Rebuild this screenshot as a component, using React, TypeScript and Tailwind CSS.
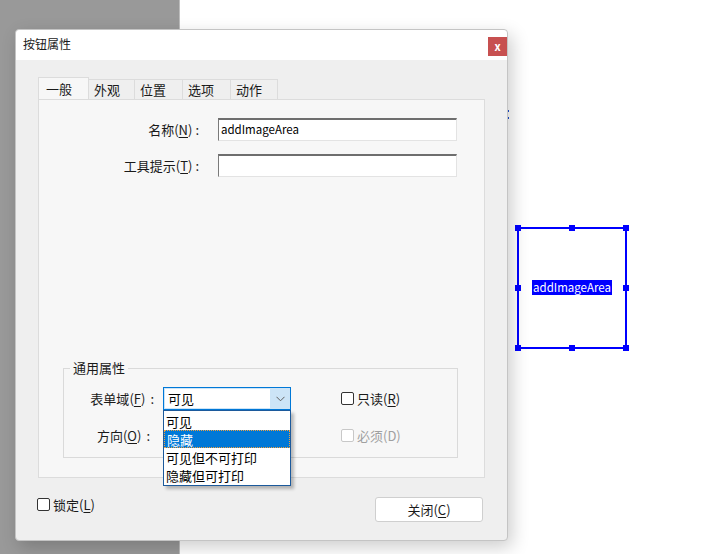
import type { ReactNode } from "react";

const font = { fontFamily: '"Noto Sans CJK SC", "Noto Sans", sans-serif' };

// label text with one underlined access key, e.g. 名称(N)
const Key = ({ pre, k, colon, gap = "ml-[3px]" }: { pre: string; k: string; colon?: boolean; gap?: string }) => (
	<>
		{pre}(<span className="underline underline-offset-2">{k}</span>)
		{colon && <span className={gap}>:</span>}
	</>
);

const Check = ({ children, disabled }: { children: ReactNode; disabled?: boolean }) => (
	<div className={`flex items-center gap-[3px] ${disabled ? "text-[#a0a0a0]" : "text-[#1a1a1a]"}`}>
		<div
			className={`h-[13px] w-[13px] rounded-[2px] border bg-white ${
				disabled ? "border-[#c8c8c8]" : "border-[#333333]"
			}`}
		/>
		<span className="leading-none">{children}</span>
	</div>
);

const TextBox = ({ value = "" }: { value?: string }) => (
	<div className="flex h-[23px] w-[239px] items-center border-t-2 border-l border-r border-b border-t-[#6e6e6e] border-l-[#7a7a7a] border-r-[#e3e3e3] border-b-[#e3e3e3] bg-white px-[2px] text-[11.5px] text-black">
		{value}
	</div>
);

const tabs = [
	{ name: "一般", w: "w-[51px]" },
	{ name: "外观", w: "w-[46px]" },
	{ name: "位置", w: "w-[48px]" },
	{ name: "选项", w: "w-[48px]" },
	{ name: "动作", w: "w-[47px]" },
];

const options = ["可见", "隐藏", "可见但不可打印", "隐藏但可打印"];

const Handle = ({ className }: { className: string }) => (
	<div className={`absolute h-[6px] w-[6px] bg-[#0000ff] ${className}`} />
);

export default function App() {
	return (
		<div className="relative flex h-[554px] w-[718px] overflow-hidden text-[13px]" style={font}>
			{/* desktop: grey margin and white page */}
			<div className="w-[179px] bg-[#999999]" />
			<div className="flex-1 border-l border-[#bdbdbd] bg-white" />

			{/* field on the page */}
			<div className="absolute left-[506px] top-[110px] h-[9px] w-[3px] border-y-2 border-[#1c4fd0]" />
			<div className="absolute left-[517px] top-[227px] flex h-[122px] w-[110px] items-center justify-center border-2 border-[#0000ff]">
				<span className="mb-[1px] bg-[#0000ff] px-[1px] text-[11.5px] leading-[15px] text-white">addImageArea</span>
				<Handle className="-left-[4px] -top-[4px]" />
				<Handle className="left-[50px] -top-[4px]" />
				<Handle className="-right-[4px] -top-[4px]" />
				<Handle className="-left-[4px] top-[56px]" />
				<Handle className="-right-[4px] top-[56px]" />
				<Handle className="-left-[4px] -bottom-[4px]" />
				<Handle className="left-[50px] -bottom-[4px]" />
				<Handle className="-right-[4px] -bottom-[4px]" />
			</div>

			{/* properties window */}
			<div className="absolute left-[15px] top-[29px] flex h-[512px] w-[493px] flex-col rounded-[4px] border border-[#c4c4c4] bg-[#efefef] shadow-[4px_6px_18px_rgba(0,0,0,0.2)]">
				<div className="flex h-[30px] items-start justify-between rounded-t-[4px] bg-white">
					<span className="pl-[7px] pt-[5px] text-[12px] text-[#1a1a1a]">按钮属性</span>
					<div className="mt-[7px] flex h-[19px] w-[19px] items-center justify-center bg-[#c75050] text-[11px] font-bold leading-none text-white">
						x
					</div>
				</div>

				<div className="flex flex-1 flex-col px-[22px] pt-[17px]">
					{/* tab strip */}
					<div className="flex h-[22px] items-end">
						{tabs.map((t, i) => (
							<div
								key={t.name}
								className={`flex items-center border border-b-0 border-[#dcdcdc] text-[#1a1a1a] ${t.w} ${
									i === 0 ? "h-[22px] bg-[#f7f7f7] pl-[7px]" : "h-[20px] border-l-0 bg-[#efefef] pl-[5px]"
								}`}
							>
								{t.name}
							</div>
						))}
					</div>

					{/* general page */}
					<div className="flex h-[379px] w-[447px] flex-col border border-[#dcdcdc] bg-[#f7f7f7]">
						<div className="grid grid-cols-[160px_239px] items-center gap-x-[19px] gap-y-[13px] pt-[18px] text-[#1a1a1a]">
							<span className="text-right">
								<Key pre="名称" k="N" colon />
							</span>
							<TextBox value="addImageArea" />
							<span className="text-right">
								<Key pre="工具提示" k="T" colon />
							</span>
							<TextBox />
						</div>

						{/* common properties group */}
						<div className="relative mb-[19px] ml-[24px] mr-[26px] mt-auto h-[90px] border border-[#dadada]">
							<span className="absolute -top-[10px] left-[6px] bg-[#f7f7f7] px-[3px] leading-[18px] text-[#1a1a1a]">
								通用属性
							</span>

							<div className="flex items-center pt-[18px]">
								<span className="w-[90px] text-right text-[#1a1a1a]">
									<Key pre="表单域" k="F" colon gap="ml-[5px]" />
								</span>
								<div className="relative ml-[9px] w-[128px]">
									<div className="flex h-[23px] items-stretch border border-[#0078d7] bg-[#cce4f7]">
										<div className="m-[1px] flex flex-1 items-center bg-white pl-[3px] text-black">可见</div>
										<div className="flex w-[19px] items-center justify-center">
											<svg width="9" height="6" viewBox="0 0 9 6" fill="none">
												<path d="M0.5 0.8 4.5 4.8 8.5 0.8" stroke="#606060" strokeWidth="1" />
											</svg>
										</div>
									</div>

									{/* open list */}
									<div className="absolute left-0 top-full z-10 w-[128px] border border-[#1c5a9c] bg-white py-[1px] text-black shadow-[3px_3px_3px_rgba(0,0,0,0.25)]">
										{options.map((o, i) => (
											<div
												key={o}
												className={`flex h-[18px] items-center pl-[2px] leading-none ${
													i === 1 ? "border border-dotted border-[#f0a040] bg-[#0078d7] text-white" : ""
												}`}
											>
												{o}
											</div>
										))}
									</div>
								</div>
								<div className="ml-[50px]">
									<Check>
										<Key pre="只读" k="R" />
									</Check>
								</div>
							</div>

							<div className="mt-[14px] flex items-center">
								<span className="w-[86px] text-right text-[#1a1a1a]">
									<Key pre="方向" k="O" colon gap="ml-[5px]" />
								</span>
								<div className="ml-[13px] h-[23px] w-[128px]" />
								<div className="ml-[50px]">
									<Check disabled>必须(D)</Check>
								</div>
							</div>
						</div>
					</div>

					{/* footer */}
					<div className="mt-[19px] flex items-start justify-between pr-[2px]">
						<div className="-ml-[1px] pt-[1px]">
							<Check>
								<Key pre="锁定" k="L" />
							</Check>
						</div>
						<div className="flex h-[25px] w-[108px] items-center justify-center rounded-[3px] border border-[#cfcfcf] bg-white text-[#1a1a1a]">
							<Key pre="关闭" k="C" />
						</div>
					</div>
				</div>
			</div>
		</div>
	);
}
